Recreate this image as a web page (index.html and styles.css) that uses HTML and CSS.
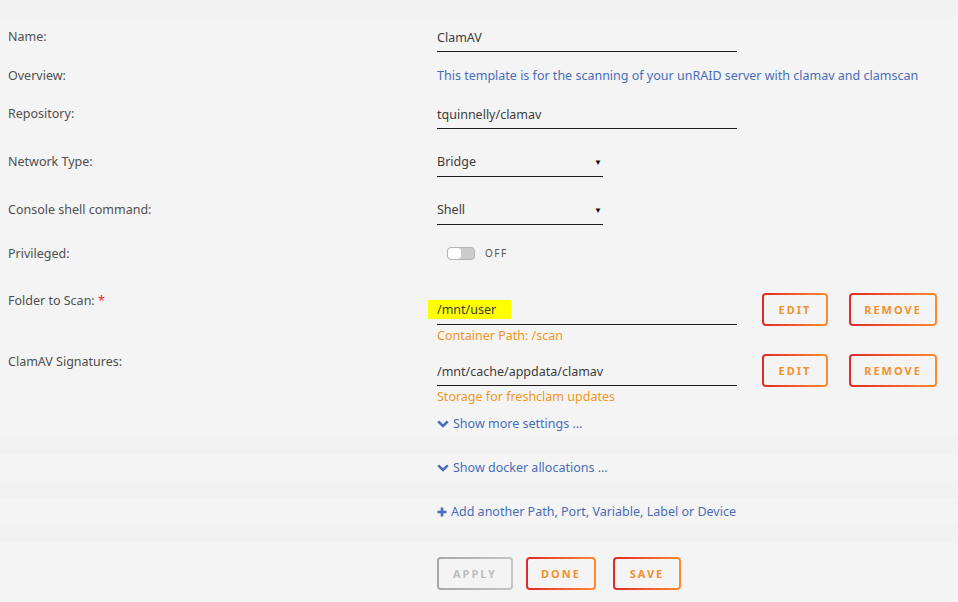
FILE: index.html
```html
<!DOCTYPE html>
<html lang="en">
<head>
    <meta charset="UTF-8">
    <meta name="viewport" content="width=device-width, initial-scale=1.0">
    <title>Add Container - ClamAV</title>
    <link rel="stylesheet" href="styles.css">
</head>
<body>
    <div class="topbar"></div>
    <form class="template" onsubmit="return false">
        <div class="row row-name">
            <label class="label" for="name">Name:</label>
            <div class="value"><input type="text" id="name" class="field" value="ClamAV"></div>
        </div>
        <div class="row row-overview">
            <span class="label">Overview:</span>
            <div class="value"><span class="overview">This template is for the scanning of your unRAID server with clamav and clamscan</span></div>
        </div>
        <div class="row row-repo">
            <label class="label" for="repo">Repository:</label>
            <div class="value"><input type="text" id="repo" class="field" value="tquinnelly/clamav"></div>
        </div>
        <div class="row row-network">
            <span class="label">Network Type:</span>
            <div class="value">
                <div class="select"><span>Bridge</span><span class="caret">&#9660;</span></div>
            </div>
        </div>
        <div class="row row-shell">
            <span class="label">Console shell command:</span>
            <div class="value">
                <div class="select"><span>Shell</span><span class="caret">&#9660;</span></div>
            </div>
        </div>
        <div class="row row-priv">
            <span class="label">Privileged:</span>
            <div class="value">
                <div class="toggle"><span class="switch"><span class="knob"></span></span><span class="toggle-text">OFF</span></div>
            </div>
        </div>

        <!-- paths -->
        <div class="row path-row">
            <span class="label">Folder to Scan: <span class="required">*</span></span>
            <div class="value path-value">
                <div class="path-field">
                    <div class="field"><span class="highlight">/mnt/user</span></div>
                    <div class="hint">Container Path: /scan</div>
                </div>
                <button class="btn btn-edit">EDIT</button>
                <button class="btn btn-remove">REMOVE</button>
            </div>
        </div>
        <div class="row path-row path-last">
            <span class="label">ClamAV Signatures:</span>
            <div class="value path-value">
                <div class="path-field">
                    <input type="text" class="field" value="/mnt/cache/appdata/clamav">
                    <div class="hint">Storage for freshclam updates</div>
                    <a href="#" class="link more-link">
                        <svg class="chevron" viewBox="0 0 12 8"><path d="M1.2 1.4 L6 6 L10.8 1.4" /></svg>Show more settings ...
                    </a>
                </div>
                <button class="btn btn-edit">EDIT</button>
                <button class="btn btn-remove">REMOVE</button>
            </div>
        </div>

        <div class="spacer"></div>
        <div class="band">
            <a href="#" class="link">
                <svg class="chevron" viewBox="0 0 12 8"><path d="M1.2 1.4 L6 6 L10.8 1.4" /></svg>Show docker allocations ...
            </a>
        </div>
        <div class="spacer"></div>
        <div class="band">
            <a href="#" class="link">
                <svg class="plus" viewBox="0 0 10 10"><path d="M5 0.5 V9.5 M0.5 5 H9.5" /></svg>Add another Path, Port, Variable, Label or Device
            </a>
        </div>
        <div class="spacer"></div>

        <div class="actions">
            <button class="btn btn-disabled" disabled>APPLY</button>
            <button class="btn btn-done">DONE</button>
            <button class="btn btn-save">SAVE</button>
        </div>
    </form>
</body>
</html>
```

FILE: styles.css
```css
body {
    font-family: "Noto Sans", "Open Sans", Arial, sans-serif;
    font-size: 12.5px;
    background-color: #f4f4f4;
    color: #4f4f4f;
    margin: 0;
    padding: 0;
}

.topbar {
    height: 17px;
    background: #f1f1f1;
}

.row {
    display: grid;
    grid-template-columns: 437px 1fr;
    align-items: start;
    padding-top: 4px;
    box-sizing: border-box;
}

.row-name { height: 39px; }
.row-overview { height: 38px; }
.row-repo { height: 48px; }
.row-network { height: 48px; }
.row-shell { height: 44px; }
.row-priv { height: 48px; }

.label {
    padding-left: 8px;
    padding-top: 6px;
    line-height: 20px;
    color: #4f4f4f;
}

.required {
    color: #e22828;
}

.field {
    display: block;
    box-sizing: border-box;
    width: 300px;
    height: 31px;
    padding: 6px 0 4px;
    margin: 0;
    border: none;
    border-bottom: 1px solid #1c1c1c;
    background: transparent;
    font: inherit;
    line-height: 20px;
    color: #3c3c3c;
    outline: none;
}

.overview {
    display: block;
    padding-top: 6px;
    line-height: 20px;
    color: #486dba;
}

.select {
    display: flex;
    justify-content: space-between;
    align-items: center;
    box-sizing: border-box;
    width: 166px;
    height: 31px;
    padding: 6px 1px 4px 0;
    line-height: 20px;
    border-bottom: 1px solid #1c1c1c;
    color: #3c3c3c;
}

.caret {
    font-size: 8px;
    color: #111;
}

.toggle {
    display: flex;
    align-items: center;
    height: 30px;
    margin-left: 10px;
}

.switch {
    position: relative;
    display: inline-block;
    width: 26px;
    height: 11px;
    border: 1px solid #b5b5b5;
    border-radius: 4px;
    background: #cccccc;
}

.knob {
    position: absolute;
    left: 0;
    top: 0;
    width: 13px;
    height: 11px;
    border-radius: 4px;
    background: #fff;
}

.toggle-text {
    margin-left: 10px;
    font-size: 10px;
    letter-spacing: 1.5px;
    color: #555;
}

/* path rows */
.path-row {
    height: 61px;
    padding-top: 0;
}

.path-row .label {
    padding-top: 9px;
}

.path-last {
    height: 94px;
}

.path-value {
    display: flex;
    align-items: flex-start;
    padding-top: 12px;
}

.path-field {
    width: 300px;
}

.highlight {
    background: #ffff00;
    margin-left: -9px;
    padding: 1px 15px 1px 9px;
    color: #3c3c3c;
}

.hint {
    margin-top: 2px;
    line-height: 18px;
    color: #f0961e;
}

.btn {
    box-sizing: border-box;
    height: 33px;
    padding: 0;
    border: 2px solid transparent;
    border-radius: 4px;
    background: linear-gradient(#f4f4f4, #f4f4f4) padding-box,
                linear-gradient(90deg, #e22828, #ff8c2f) border-box;
    font-family: inherit;
    font-size: 11px;
    font-weight: bold;
    letter-spacing: 2px;
    color: #f4902e;
    cursor: pointer;
}

.btn-edit {
    width: 66px;
    margin-left: 25px;
    margin-top: -1px;
}

.btn-remove {
    width: 88px;
    margin-left: 21px;
    margin-top: -1px;
}

.link {
    display: inline-flex;
    align-items: center;
    color: #486dba;
    text-decoration: none;
    line-height: 18px;
}

.more-link {
    margin-top: 9px;
}

.chevron {
    width: 12px;
    height: 8px;
    margin-right: 4px;
    fill: none;
    stroke: #486dba;
    stroke-width: 2.6;
}

.plus {
    width: 10px;
    height: 10px;
    margin-right: 4px;
    fill: none;
    stroke: #486dba;
    stroke-width: 2.6;
}

.spacer {
    height: 17px;
    background: #f1f1f1;
}

.band {
    display: flex;
    align-items: center;
    height: 27px;
    padding-left: 437px;
}

.actions {
    display: flex;
    gap: 13px;
    padding: 15px 0 0 437px;
}

.btn-disabled {
    width: 76px;
    background: linear-gradient(#f4f4f4, #f4f4f4) padding-box,
                linear-gradient(90deg, #a8a8a8, #c4c4c4) border-box;
    color: #bdbdbd;
    cursor: default;
}

.btn-done {
    width: 70px;
}

.btn-save {
    width: 68px;
    margin-left: 4px;
}
```
